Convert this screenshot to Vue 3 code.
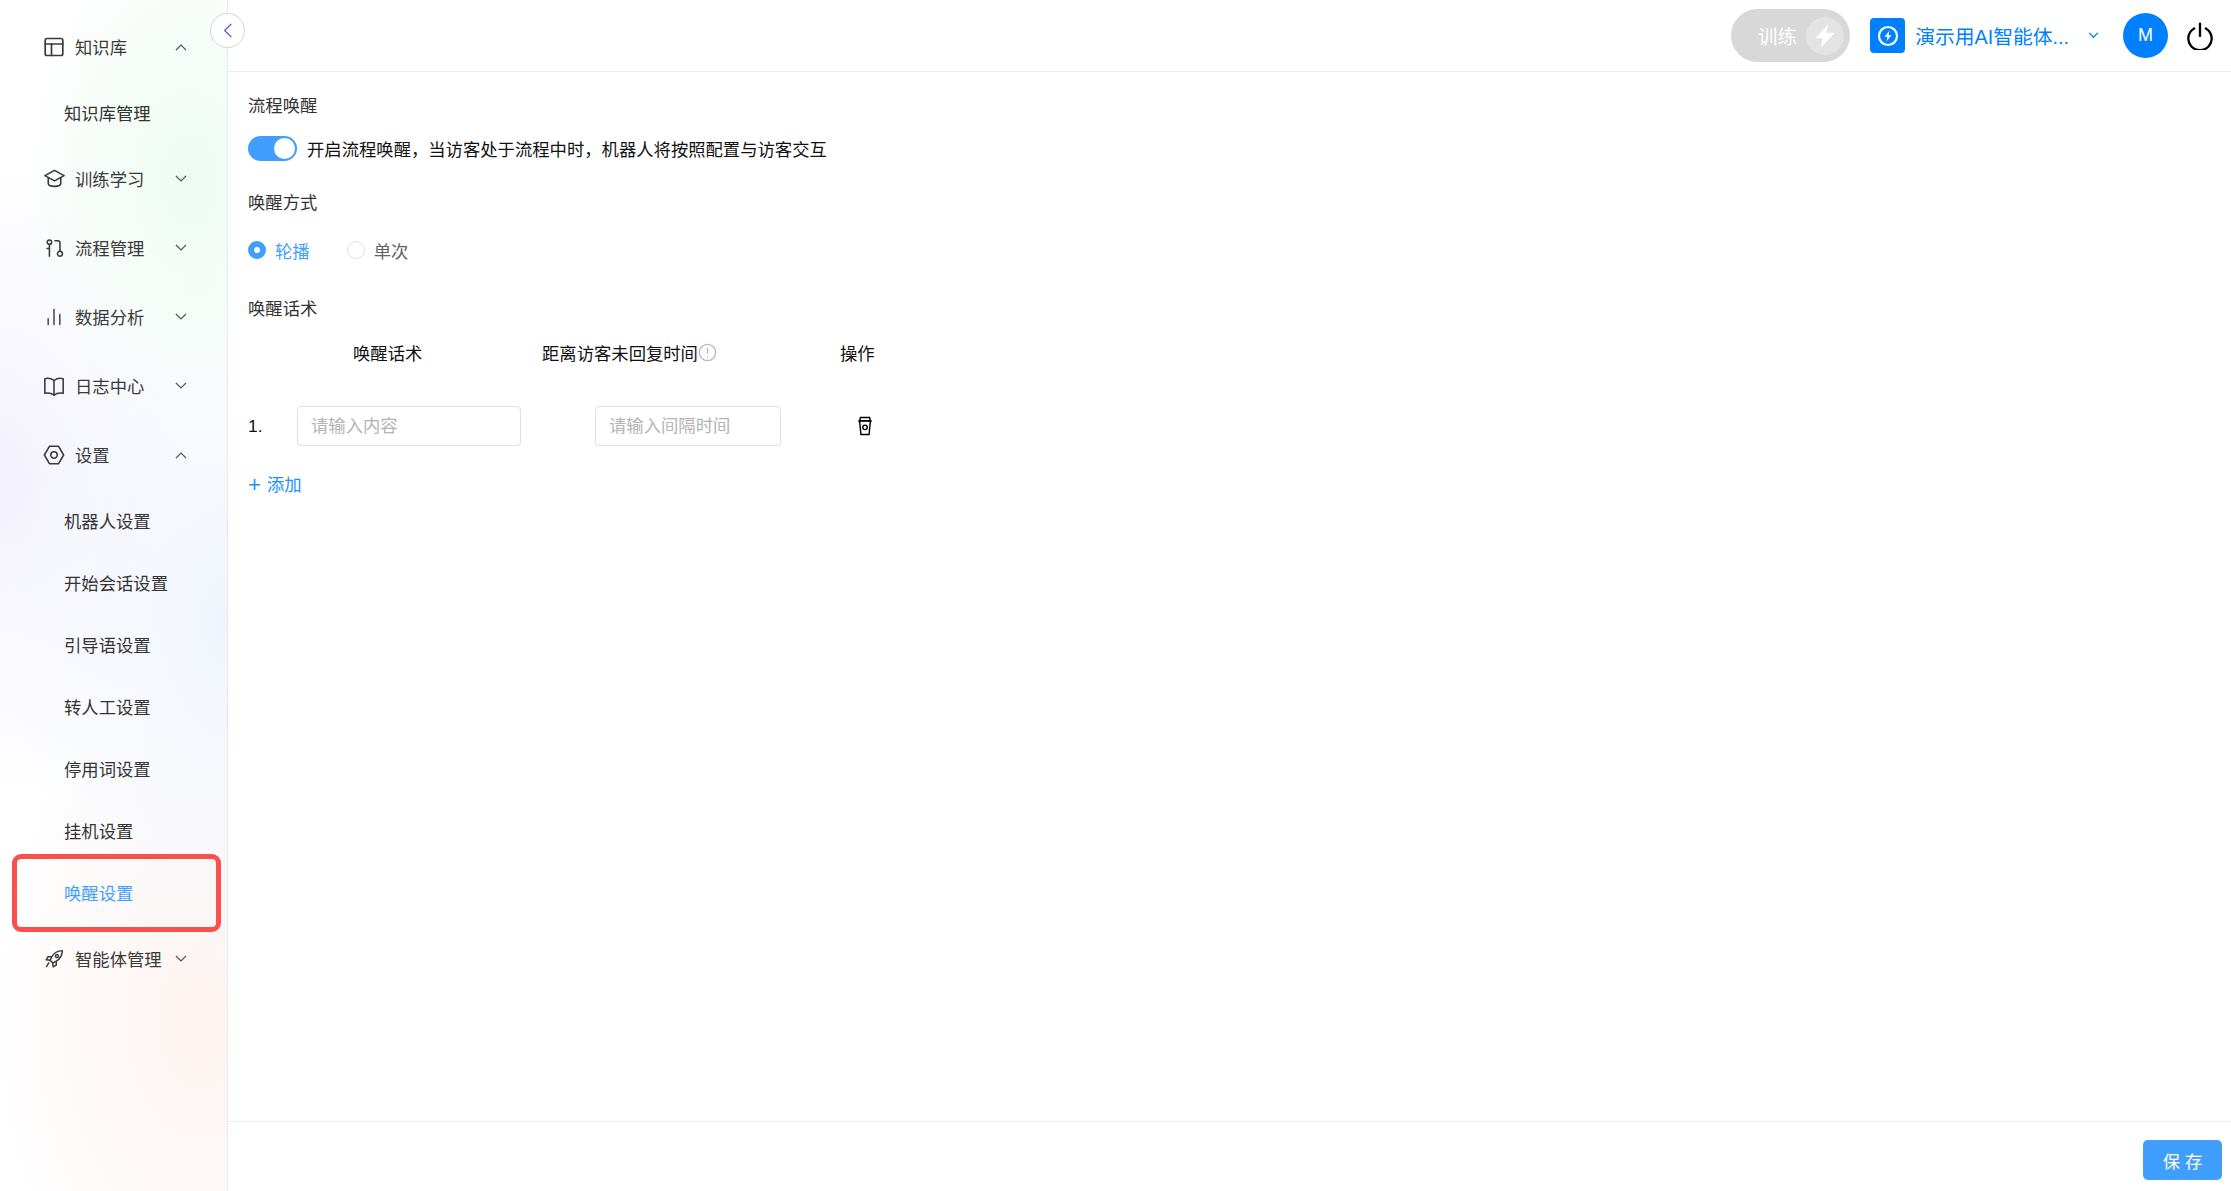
<script setup>
const icons = {
  panel: { w: 24, paths: ['M5 3.500h14a1.800 1.800 0 0 1 1.800 1.800v13.400a1.800 1.800 0 0 1-1.800 1.800H5a1.800 1.800 0 0 1-1.800-1.800V5.300A1.800 1.800 0 0 1 5 3.500z', 'M3.200 9h17.600', 'M9.500 9v11.500'] },
  cap: { w: 23, paths: ['M12 3.500 22 9l-10 5.500L2 9z', 'M5.500 11.500v5.500c0 2 3 3.200 6.500 3.200s6.500-1.200 6.500-3.200v-5.500'] },
  flow: { w: 22, paths: ['M7 3.200a2.400 2.400 0 1 0 0 4.800 2.400 2.400 0 0 0 0-4.800z', 'M7 8v13', 'M4.500 12.500H7', 'M13 4h3a2.500 2.500 0 0 1 2.500 2.500v9', 'M18.500 15.500a2.700 2.700 0 1 0 0 5.400 2.700 2.700 0 0 0 0-5.400z'] },
  bars: { w: 20, paths: ['M5 21v-7', 'M12 21V3', 'M19 21V9'] },
  book: { w: 22, paths: ['M12 6C9 3.700 5.500 3.200 2 4v16c3.500-.8 7-.3 10 2 3-2.300 6.500-2.800 10-2V4c-3.500-.8-7-.3-10 2z', 'M12 6v16'] },
  hex: { w: 22, paths: ['M7 2.500h10l5.500 9.500-5.500 9.500H7L1.500 12z', 'M12 8.500a3.500 3.500 0 1 0 0 7 3.500 3.500 0 0 0 0-7z'] },
  rocket: { w: 21, paths: ['M21 3c-5.500.2-9.500 2.500-12 7l-2 4 3 3 4-2c4.500-2.500 6.800-6.500 7-12z', 'M14.800 7.500a1.700 1.700 0 1 0 0 3.400 1.700 1.700 0 0 0 0-3.400z', 'M8.500 10H4.500L2.500 13.500 7 14', 'M14 15.500v4l-3.500 2-.5-4.500', 'M5.500 17 3 21'] }
}
const groups = [
  { name: '知识库', icon: 'panel', open: true, subs: ['知识库管理'] },
  { name: '训练学习', icon: 'cap' },
  { name: '流程管理', icon: 'flow' },
  { name: '数据分析', icon: 'bars' },
  { name: '日志中心', icon: 'book' },
  { name: '设置', icon: 'hex', open: true, subs: ['机器人设置', '开始会话设置', '引导语设置', '转人工设置', '停用词设置', '挂机设置', '唤醒设置'] },
  { name: '智能体管理', icon: 'rocket' }
]
</script>

<template>
  <div class="page">
    <aside class="sidebar">
      <button class="collapse" aria-label="收起">
        <svg viewBox="0 0 12 20" width="10" height="17"><path d="M10 2 2 10l8 8" fill="none" stroke="#4a55e0" stroke-width="1.500" /></svg>
      </button>
      <nav class="nav">
        <div v-for="g in groups" :key="g.name" class="group">
          <div class="head">
            <span class="icon-box">
              <svg viewBox="0 0 24 24" :width="icons[g.icon].w" :height="icons[g.icon].w" fill="none" stroke="#3a3a3a" stroke-width="1.700" stroke-linejoin="round" stroke-linecap="round">
                <path v-for="d in icons[g.icon].paths" :key="d" :d="d" />
              </svg>
            </span>
            <span class="head-text">{{ g.name }}</span>
            <svg class="chev" viewBox="0 0 12 8" width="12" height="8">
              <path :d="g.open ? 'M1 7l5-5 5 5' : 'M1 1l5 5 5-5'" fill="none" stroke="#555" stroke-width="1.200" />
            </svg>
          </div>
          <div v-if="g.subs" class="subs">
            <div v-for="s in g.subs" :key="s" class="sub" :class="{ active: s === '唤醒设置' }">{{ s }}</div>
          </div>
        </div>
      </nav>
    </aside>

    <div class="main">
      <header class="topbar">
        <div class="train">
          <span class="train-text">训练</span>
          <span class="train-dot">
            <svg viewBox="0 0 24 24" width="26" height="26"><path d="M15 1 3 14h7l-2 9 13-14h-8z" fill="#fff" /></svg>
          </span>
        </div>
        <div class="agent">
          <span class="agent-logo">
            <svg viewBox="0 0 24 24" width="24" height="24" fill="none">
              <circle cx="12" cy="12" r="9" stroke="#fff" stroke-width="2.200" />
              <path d="M13.500 6.500 8.500 13h3l-1 4.500 5-6.500h-3z" fill="#fff" />
            </svg>
          </span>
          <span class="agent-name">演示用AI智能体...</span>
          <svg class="agent-chev" viewBox="0 0 12 8" width="11" height="7"><path d="M1 1l5 5 5-5" fill="none" stroke="#0080ff" stroke-width="1.500" /></svg>
        </div>
        <div class="avatar">M</div>
        <svg class="power" viewBox="0 0 24 24" width="28" height="28" fill="none" stroke="#000" stroke-width="2" stroke-linecap="round">
          <path d="M7 5.500a10 10 0 1 0 10 0" />
          <path d="M12 1.500v10.500" />
        </svg>
      </header>

      <section class="content">
        <div class="label first">流程唤醒</div>
        <div class="switch-row">
          <span class="switch"><span class="knob"></span></span>
          <span class="switch-text">开启流程唤醒，当访客处于流程中时，机器人将按照配置与访客交互</span>
        </div>
        <div class="label second">唤醒方式</div>
        <div class="radios">
          <span class="radio on"></span><span class="radio-text on-text">轮播</span>
          <span class="radio"></span><span class="radio-text">单次</span>
        </div>
        <div class="label third">唤醒话术</div>
        <div class="thead">
          <span class="th th1">唤醒话术</span>
          <span class="th th2">距离访客未回复时间<svg viewBox="0 0 18 18" width="19" height="19" fill="none" stroke="#b4b8c4" stroke-width="1.200"><circle cx="9" cy="9" r="7.800" /><path d="M9 4.500v6M9 12.500v1.300" /></svg></span>
          <span class="th">操作</span>
        </div>
        <div class="row">
          <span class="index">1.</span>
          <input class="input input1" placeholder="请输入内容" />
          <input class="input input2" placeholder="请输入间隔时间" />
          <svg class="del" viewBox="0 0 20 22" width="18" height="20" fill="none" stroke="#000" stroke-width="1.600">
            <path d="M5 1.500h10l1 3.500H4z" />
            <path d="M2.500 5.500h15" />
            <path d="M4 5.500 5.500 20.500h9L16 5.500" />
            <circle cx="10" cy="12.500" r="2.500" />
          </svg>
        </div>
        <div class="add"><span class="plus">+</span>添加</div>
      </section>

      <footer class="footer">
        <button class="save">保 存</button>
      </footer>
    </div>
  </div>
</template>

<style scoped>
.page {
  display: flex;
  height: 100vh;
  overflow: hidden;
  font-family: "Liberation Sans", "Noto Sans CJK SC", sans-serif;
  font-size: 17.33px;
  color: #222;
  background: #fff;
}
.sidebar {
  position: relative;
  flex: none;
  width: 227px;
  border-right: 1px solid #e9e9ec;
  background:
    radial-gradient(ellipse 170px 260px at 190px 180px, #edfbf1 0%, rgba(237, 251, 241, 0) 100%),
    radial-gradient(ellipse 200px 320px at 0 480px, #f3f2fd 0%, rgba(243, 242, 253, 0) 100%),
    radial-gradient(ellipse 220px 380px at 227px 620px, #f0f5fd 0%, rgba(240, 245, 253, 0) 100%),
    radial-gradient(ellipse 210px 340px at 200px 1020px, #fdf3f0 0%, rgba(253, 243, 240, 0) 100%),
    #fff;
}
.collapse {
  position: absolute;
  z-index: 2;
  top: 13px;
  left: 210px;
  width: 35px;
  height: 35px;
  padding: 0;
  display: flex;
  align-items: center;
  justify-content: center;
  border: 1px solid #d6d6d6;
  border-radius: 50%;
  background: #fff;
}
.nav {
  padding-top: 12px;
}
.head {
  display: flex;
  align-items: center;
  height: 69px;
  padding-left: 44px;
  color: #3a3a3a;
}
.icon-box {
  display: flex;
  align-items: center;
  justify-content: center;
  width: 20px;
  height: 24px;
  margin-right: 11px;
}
.icon-box svg {
  flex: none;
}
.head-text {
  flex: none;
  width: 100px;
  white-space: nowrap;
}
.chev {
  flex: none;
}
.subs {
  padding-bottom: 1px;
}
.sub {
  position: relative;
  display: flex;
  align-items: center;
  height: 62px;
  padding-left: 64px;
  color: #333;
}
.sub.active {
  color: #409eff;
}
.sub.active::after {
  content: "";
  position: absolute;
  top: -7px;
  left: 12px;
  width: 209px;
  height: 78px;
  box-sizing: border-box;
  border: 5px solid #f9504b;
  border-radius: 9px;
}
.main {
  flex: 1;
  min-width: 0;
  display: flex;
  flex-direction: column;
}
.topbar {
  flex: none;
  height: 72px;
  box-sizing: border-box;
  border-bottom: 1px solid #ececec;
  display: flex;
  align-items: center;
  justify-content: flex-end;
  padding-right: 17px;
}
.train {
  width: 119px;
  height: 53px;
  box-sizing: border-box;
  border-radius: 27px;
  background: #d8d8d8;
  display: flex;
  align-items: center;
  justify-content: flex-end;
  padding-right: 6px;
  color: #fff;
  margin-right: 20px;
}
.train-text {
  font-size: 19.500px;
  margin-right: 9px;
}
.train-dot {
  width: 38px;
  height: 38px;
  border-radius: 50%;
  background: #e3e3e3;
  display: flex;
  align-items: center;
  justify-content: center;
}
.agent {
  display: flex;
  align-items: center;
  margin-right: 24px;
}
.agent-logo {
  width: 35px;
  height: 35px;
  border-radius: 4px;
  background: #0080ff;
  display: flex;
  align-items: center;
  justify-content: center;
  margin-right: 10px;
}
.agent-name {
  color: #0080ff;
  font-size: 19.800px;
  white-space: nowrap;
  margin-right: 19px;
}
.avatar {
  width: 45px;
  height: 45px;
  border-radius: 50%;
  background: #0080ff;
  color: #fff;
  display: flex;
  align-items: center;
  justify-content: center;
  font-size: 18px;
  margin-right: 18px;
}
.content {
  flex: 1;
  padding: 0 20px;
}
.label {
  line-height: 26px;
  color: #333;
}
.first {
  margin-top: 21px;
}
.switch-row {
  display: flex;
  align-items: center;
  margin-top: 16px;
  height: 26px;
}
.switch {
  width: 49px;
  height: 25px;
  border-radius: 13px;
  background: #409eff;
  display: flex;
  align-items: center;
  justify-content: flex-end;
  padding-right: 2px;
  box-sizing: border-box;
  margin-right: 10px;
}
.knob {
  width: 21px;
  height: 21px;
  border-radius: 50%;
  background: #fff;
}
.switch-text {
  color: #111;
}
.second {
  margin-top: 29px;
}
.radios {
  display: flex;
  align-items: center;
  height: 26px;
  margin-top: 21px;
}
.radio {
  width: 18px;
  height: 18px;
  box-sizing: border-box;
  border: 1px solid #dcdfe6;
  border-radius: 50%;
  background: #fff;
  margin-right: 9px;
}
.radio.on {
  border: 6px solid #409eff;
}
.radio-text {
  color: #606266;
  margin-right: 37px;
}
.on-text {
  color: #409eff;
}
.third {
  margin-top: 33px;
}
.thead {
  display: flex;
  align-items: center;
  padding-left: 105px;
  margin-top: 17px;
  height: 26px;
}
.th {
  color: #111;
  white-space: nowrap;
}
.th1 {
  width: 189px;
}
.th2 {
  width: 298px;
  display: flex;
  align-items: center;
}
.row {
  display: flex;
  align-items: center;
  height: 40px;
  margin-top: 41px;
}
.index {
  width: 49px;
  color: #111;
}
.input {
  height: 40px;
  box-sizing: border-box;
  border: 1px solid #dcdfe6;
  border-radius: 4px;
  padding: 0 13px;
  font: inherit;
  outline: none;
  background: #fff;
}
.input::placeholder {
  color: #b4b4b4;
}
.input1 {
  width: 224px;
  margin-right: 74px;
}
.input2 {
  width: 186px;
  margin-right: 75px;
}
.add {
  color: #1890ff;
  margin-top: 26px;
  line-height: 26px;
  display: flex;
  align-items: center;
}
.plus {
  font-size: 22px;
  width: 19px;
  line-height: 26px;
}
.footer {
  flex: none;
  height: 70px;
  box-sizing: border-box;
  border-top: 1px solid #ececec;
  display: flex;
  align-items: center;
  justify-content: flex-end;
  padding: 7px 9px 0 0;
}
.save {
  width: 79px;
  height: 40px;
  border: none;
  border-radius: 5px;
  background: #409eff;
  color: #fff;
  font: inherit;
  padding: 0;
}
</style>

<style>
html, body {
  margin: 0;
  padding: 0;
}
</style>
